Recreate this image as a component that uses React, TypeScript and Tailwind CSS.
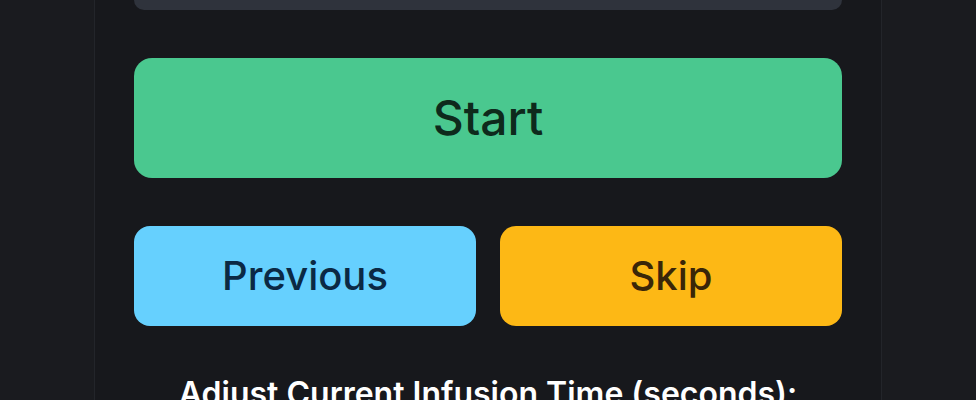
export default function App() {
  return (
    <div
      className="w-[976px] h-[400px] overflow-hidden bg-[#1a1b1f] flex justify-center"
      style={{ fontFamily: "Inter, 'Noto Sans', sans-serif" }}
    >
      <div className="w-[788px] h-full bg-[#17181c] border-x border-[#23252a] px-[39px] flex flex-col">
        <div className="h-[10px] shrink-0 rounded-b-[12px] bg-[#2f333c]" />
        <button className="mt-[48px] h-[120px] shrink-0 rounded-[18px] bg-[#4ac88f] text-[#0e2a1c] text-[48px] font-medium">
          Start
        </button>
        <div className="mt-[48px] grid grid-cols-2 gap-[24px] shrink-0">
          <button className="h-[100px] rounded-[16px] bg-[#66d0fe] text-[#0b2944] text-[40px] font-medium">
            Previous
          </button>
          <button className="h-[100px] rounded-[16px] bg-[#fdb815] text-[#3a2608] text-[40px] font-medium">
            Skip
          </button>
        </div>
        <div className="mt-[48px] text-center text-white text-[32px] font-semibold leading-[40px] shrink-0">
          Adjust Current Infusion Time (seconds):
        </div>
      </div>
    </div>
  );
}
